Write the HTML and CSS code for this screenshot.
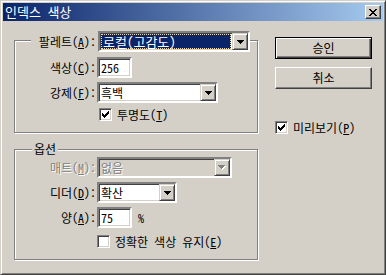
FILE: index.html
```html
<!DOCTYPE html>
<html lang="ko">
<head>
  <meta charset="UTF-8" />
  <title>인덱스 색상</title>
  <link rel="stylesheet" href="styles.css">
</head>
<body>
  <div class="window">
    <div class="titlebar">
      <span class="title">인덱스 색상</span>
      <span class="close">
        <svg width="8" height="7" viewBox="0 0 8 7" shape-rendering="crispEdges"><path d="M0 0h2v1H0zM6 0h2v1H6zM1 1h2v1H1zM5 1h2v1H5zM2 2h4v1H2zM3 3h2v1H3zM2 4h4v1H2zM1 5h2v1H1zM5 5h2v1H5zM0 6h2v1H0zM6 6h2v1H6z" fill="#000"/></svg>
      </span>
    </div>

    <div class="body">
      <div class="left">
        <!-- palette group: the combo row sits on the top border -->
        <div class="group group-palette">
          <div class="head">
            <span class="head-label">팔레트(<u>A</u>):</span>
            <div class="combo w152">
              <div class="value selected"><span class="focus">로컬(고감도)</span></div>
              <span class="drop"><svg width="7" height="4" viewBox="0 0 7 4" shape-rendering="crispEdges"><path d="M0 0h7v1H0zM1 1h5v1H1zM2 2h3v1H2zM3 3h1v1H3z" fill="#000"/></svg></span>
            </div>
          </div>
          <div class="row r-colors">
            <span class="lbl">색상(<u>C</u>):</span>
            <div class="field w35">256</div>
          </div>
          <div class="row r-forced">
            <span class="lbl">강제(<u>F</u>):</span>
            <div class="combo w121">
              <div class="value">흑백</div>
              <span class="drop"><svg width="7" height="4" viewBox="0 0 7 4" shape-rendering="crispEdges"><path d="M0 0h7v1H0zM1 1h5v1H1zM2 2h3v1H2zM3 3h1v1H3z" fill="#000"/></svg></span>
            </div>
          </div>
          <div class="check r-trans">
            <span class="box"><svg width="7" height="7" viewBox="0 0 7 7" shape-rendering="crispEdges"><path d="M6 0h1v1H6zM5 1h2v1H5zM0 2h1v1H0zM4 2h3v1H4zM0 3h2v1H0zM3 3h3v1H3zM0 4h5v1H0zM1 5h3v1H1zM2 6h1v1H2z" fill="#000"/></svg></span>
            <span class="check-text">투명도(<u>T</u>)</span>
          </div>
        </div>

        <div class="group group-options">
          <span class="legend">옵션</span>
          <div class="row r-matte">
            <span class="lbl disabled">매트(<u>M</u>):</span>
            <div class="combo w135 off">
              <div class="value">없음</div>
              <span class="drop"><svg width="8" height="5" viewBox="0 0 8 5" shape-rendering="crispEdges"><path d="M1 1h7v1H1zM2 2h5v1H2zM3 3h3v1H3zM4 4h1v1H4z" fill="#fff"/><path d="M0 0h7v1H0zM1 1h5v1H1zM2 2h3v1H2zM3 3h1v1H3z" fill="#808080"/></svg></span>
            </div>
          </div>
          <div class="row r-dither">
            <span class="lbl">디더(<u>D</u>):</span>
            <div class="combo w80">
              <div class="value">확산</div>
              <span class="drop"><svg width="7" height="4" viewBox="0 0 7 4" shape-rendering="crispEdges"><path d="M0 0h7v1H0zM1 1h5v1H1zM2 2h3v1H2zM3 3h1v1H3z" fill="#000"/></svg></span>
            </div>
          </div>
          <div class="row r-amount">
            <span class="lbl">양(<u>A</u>):</span>
            <div class="field w35">75</div>
            <span class="unit">%</span>
          </div>
          <div class="check r-exact">
            <span class="box"></span>
            <span class="check-text">정확한 색상 유지(<u>E</u>)</span>
          </div>
        </div>
      </div>

      <div class="right">
        <button class="btn btn-default">승인</button>
        <button class="btn btn-cancel">취소</button>
        <div class="check r-preview">
          <span class="box"><svg width="7" height="7" viewBox="0 0 7 7" shape-rendering="crispEdges"><path d="M6 0h1v1H6zM5 1h2v1H5zM0 2h1v1H0zM4 2h3v1H4zM0 3h2v1H0zM3 3h3v1H3zM0 4h5v1H0zM1 5h3v1H1zM2 6h1v1H2z" fill="#000"/></svg></span>
          <span class="check-text">미리보기(<u>P</u>)</span>
        </div>
      </div>
    </div>
  </div>
</body>
</html>
```

FILE: styles.css
```css
html, body {
  margin: 0;
  padding: 0;
  background-color: #d4d0c8;
}

body {
  font-family: "Noto Sans Mono CJK KR", "Noto Sans CJK KR", sans-serif;
  font-size: 12px;
  line-height: 14px;
  color: #000;
}

u {
  text-decoration: underline;
  text-underline-offset: 1px;
}

/* === Window frame === */
.window {
  box-sizing: border-box;
  width: 386px;
  height: 275px;
  background-color: #d4d0c8;
  border: 1px solid;
  border-color: #d4d0c8 #404040 #404040 #d4d0c8;
  box-shadow: inset 1px 1px #fff, inset -1px -1px #808080;
  padding: 2px;
}

.titlebar {
  height: 18px;
  display: flex;
  align-items: center;
  justify-content: space-between;
  padding: 0 2px 0 2px;
  background: linear-gradient(to right, #0a246a, #a6caf0);
}

.title {
  color: #fff;
  font-size: 13px;
}

.close {
  box-sizing: border-box;
  width: 16px;
  height: 14px;
  display: flex;
  align-items: center;
  justify-content: center;
  background-color: #d4d0c8;
  border: 1px solid;
  border-color: #fff #404040 #404040 #fff;
  box-shadow: inset -1px -1px #808080;
}

.body {
  display: flex;
  padding-left: 11px;
}

.left {
  width: 244px;
}

.right {
  margin-left: 17px;
  display: flex;
  flex-direction: column;
  align-items: flex-start;
}

/* === Group boxes (etched) === */
.group {
  box-sizing: border-box;
  border: 1px solid #808080;
  box-shadow: inset 1px 1px #fff, 1px 1px #fff;
}

.group-palette {
  margin-top: 19px;
  height: 93px;
}

.group-options {
  margin-top: 16px;
  height: 111px;
}

.head {
  display: flex;
  align-items: center;
  margin-top: -10px;
  margin-left: 16px;
  width: 219px;
  background-color: #d4d0c8;
}

.head-label {
  width: 65px;
  text-align: right;
  margin-right: 2px;
}

.legend {
  display: block;
  width: max-content;
  margin-top: -8px;
  margin-left: 17px;
  padding: 0 2px;
  background-color: #d4d0c8;
}

.row {
  display: flex;
  align-items: center;
}

.lbl {
  width: 81px;
  text-align: right;
  margin-right: 1px;
}

.disabled {
  color: #808080;
  text-shadow: 1px 1px #fff;
}

.r-colors { margin-top: 5px; }
.r-forced { margin-top: 4px; }
.r-trans { margin-top: 5px; margin-left: 84px; }

.r-matte { margin-top: 1px; }
.r-dither { margin-top: 4px; }
.r-amount { margin-top: 4px; }
.r-exact { margin-top: 7px; margin-left: 82px; }

.unit {
  margin-left: 6px;
}

/* === Sunken controls === */
.combo, .field {
  box-sizing: border-box;
  height: 21px;
  border: 2px solid;
  border-color: #808080 #fff #fff #808080;
  box-shadow: inset 1px 1px #404040, inset -1px -1px #d4d0c8;
  background-color: #fff;
}

.combo {
  display: flex;
}

.field {
  padding: 1px 2px;
  line-height: 15px;
}

.w35 { width: 35px; }
.w80 { width: 80px; }
.w121 { width: 121px; }
.w135 { width: 135px; }
.w152 { width: 152px; }

.value {
  flex: 1;
  padding: 1px 2px;
  line-height: 15px;
  white-space: nowrap;
}

.value.selected {
  padding: 1px;
}

.focus {
  display: block;
  height: 15px;
  box-sizing: border-box;
  padding: 0 1px;
  line-height: 13px;
  font-size: 13px;
  color: #fff;
  background-color: #0a246a;
  border: 1px dotted #f5db95;
}

.off {
  background-color: #d4d0c8;
}

.off .value {
  color: #808080;
  text-shadow: 1px 1px #fff;
}

.drop {
  box-sizing: border-box;
  width: 16px;
  height: 17px;
  display: flex;
  align-items: center;
  justify-content: center;
  background-color: #d4d0c8;
  border: 1px solid;
  border-color: #d4d0c8 #404040 #404040 #d4d0c8;
  box-shadow: inset 1px 1px #fff, inset -1px -1px #808080;
}

/* === Checkboxes === */
.check {
  display: flex;
  align-items: center;
  height: 13px;
}

.box {
  box-sizing: border-box;
  width: 13px;
  height: 13px;
  display: flex;
  align-items: center;
  justify-content: center;
  border: 1px solid;
  border-color: #808080 #fff #fff #808080;
  box-shadow: inset 1px 1px #404040, inset -1px -1px #d4d0c8;
  background-color: #fff;
}

.check-text {
  margin-left: 5px;
}

/* === Buttons === */
.btn {
  box-sizing: border-box;
  width: 97px;
  height: 22px;
  padding: 0;
  font: inherit;
  color: #000;
  background-color: #d4d0c8;
  border: 1px solid;
  border-color: #fff #404040 #404040 #fff;
  box-shadow: inset -1px -1px #808080;
}

.btn-default {
  margin-top: 16px;
  border: 1px solid #000;
  box-shadow: inset 1px 1px #fff, inset -1px -1px #404040, inset -2px -2px #808080;
}

.btn-cancel {
  margin-top: 8px;
}

.r-preview {
  margin-top: 32px;
}
```
